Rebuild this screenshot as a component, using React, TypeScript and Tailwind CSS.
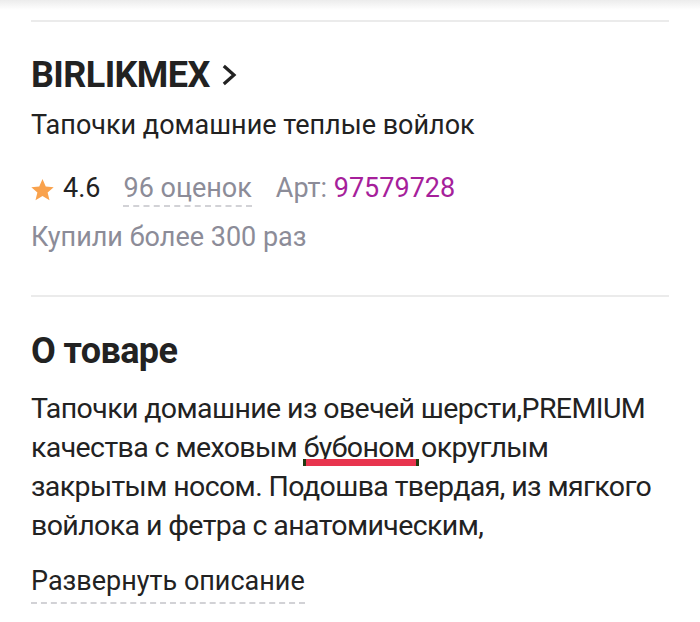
import React from "react";

export default function App() {
  return (
    <div className="w-[700px] h-[622px] bg-white overflow-hidden relative" style={{ fontFamily: "Roboto, 'Noto Sans', sans-serif" }}>
      <div className="h-[10px] bg-gradient-to-b from-[#ececec] to-white" />
      <div className="px-[31px]">
        <div className="mt-[10px] h-[2px] bg-[#ebebeb]" />
        <div className="mt-[32px] flex items-center gap-[12px] text-[#222]">
          <span className="text-[36px] font-bold leading-[42px] tracking-[-0.6px]">BIRLIKMEX</span>
          <svg width="16" height="22" viewBox="0 0 16 22" fill="none" stroke="#222" strokeWidth="3.2" strokeLinecap="square">
            <path d="M3 3 L12 11 L3 19" />
          </svg>
        </div>
        <div className="mt-[13px] text-[27px] leading-[32px] text-[#222]">Тапочки домашние теплые войлок</div>
        <div className="mt-[31px] flex items-baseline text-[27px] leading-[32px]">
          <svg width="23" height="23" viewBox="1 1 22 21" className="self-center mr-[9px]">
            <path d="M12 1.5l3.1 7.1 7.6.7-5.8 5 1.8 7.5L12 17.8 5.3 21.8l1.8-7.5-5.8-5 7.6-.7z" fill="#f9a24d" />
          </svg>
          <span className="text-[#222]">4.6</span>
          <span className="ml-[23px] text-[#8c8c98] border-b-2 border-dashed border-[#d2d2d6] pb-[1px]">96 оценок</span>
          <span className="ml-[24px] text-[#8c8c98]">Арт: <span className="text-[#a61f9b]">97579728</span></span>
        </div>
        <div className="mt-[14px] text-[27px] leading-[32px] text-[#8c8c98]">Купили более 300 раз</div>
        <div className="mt-[42px] h-[2px] bg-[#ebebeb]" />
        <div className="mt-[33px] text-[36px] font-bold leading-[42px] text-[#222] tracking-[-0.6px]">О товаре</div>
        <div className="mt-[17px] text-[28.5px] leading-[39px] text-[#222] tracking-[-0.6px]">
          Тапочки домашние из овечей шерсти,PREMIUM качества с меховым{" "}
          <span className="relative">
            бубоном
            <span className="absolute left-[-1px] right-[-4px] top-[28px] h-[7px] bg-[#e8344e] border-x-[3px] border-[#1f3a10]" />
          </span>{" "}
          округлым закрытым носом. Подошва твердая, из мягкого войлока и фетра с анатомическим,
        </div>
        <div className="mt-[20px] text-[27px] leading-[32px]">
          <span className="text-[#222] border-b-2 border-dashed border-[#d2d2d6] pb-[5px]">Развернуть описание</span>
        </div>
      </div>
    </div>
  );
}
